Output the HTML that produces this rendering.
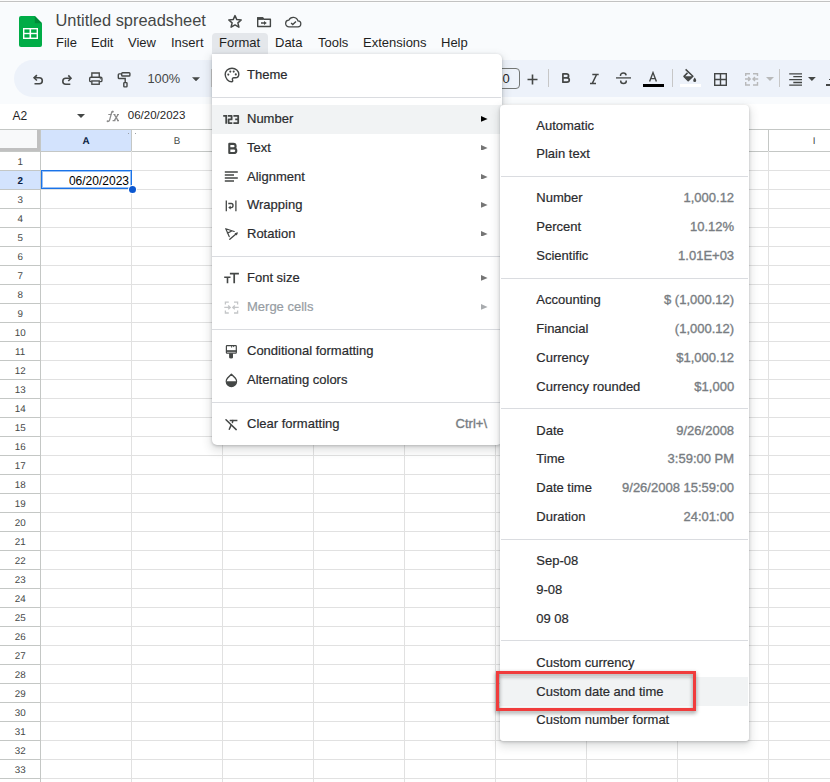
<!DOCTYPE html>
<html><head><meta charset="utf-8">
<style>
html,body{margin:0;padding:0;}
body{width:830px;height:782px;overflow:hidden;position:relative;background:#f9fbfd;font-family:"Liberation Sans",sans-serif;}
.t{position:absolute;line-height:1;white-space:nowrap;}
</style></head><body>
<div style="position:absolute;left:0;top:129px;width:830px;height:653px;background:#fff"></div>
<div style="position:absolute;left:0;top:151px;width:40px;height:631px;background:#fff"></div>
<div style="position:absolute;left:41px;top:130px;width:90px;height:21px;background:#d3e3fd"></div>
<div style="position:absolute;left:0;top:171px;width:40px;height:18px;background:#d3e3fd"></div>
<div style="position:absolute;left:0;top:129px;width:830px;height:1px;background:#c4c7c5"></div>
<div style="position:absolute;left:0;top:151px;width:40px;height:1px;background:#c4c7c5"></div>
<div style="position:absolute;left:41px;top:151px;width:789px;height:1px;background:#c4c7c5"></div>
<div style="position:absolute;left:0;top:170px;width:40px;height:1px;background:#c4c7c5"></div>
<div style="position:absolute;left:41px;top:170px;width:789px;height:1px;background:#e1e1e1"></div>
<div style="position:absolute;left:0;top:189px;width:40px;height:1px;background:#c4c7c5"></div>
<div style="position:absolute;left:41px;top:189px;width:789px;height:1px;background:#e1e1e1"></div>
<div style="position:absolute;left:0;top:208px;width:40px;height:1px;background:#c4c7c5"></div>
<div style="position:absolute;left:41px;top:208px;width:789px;height:1px;background:#e1e1e1"></div>
<div style="position:absolute;left:0;top:227px;width:40px;height:1px;background:#c4c7c5"></div>
<div style="position:absolute;left:41px;top:227px;width:789px;height:1px;background:#e1e1e1"></div>
<div style="position:absolute;left:0;top:246px;width:40px;height:1px;background:#c4c7c5"></div>
<div style="position:absolute;left:41px;top:246px;width:789px;height:1px;background:#e1e1e1"></div>
<div style="position:absolute;left:0;top:265px;width:40px;height:1px;background:#c4c7c5"></div>
<div style="position:absolute;left:41px;top:265px;width:789px;height:1px;background:#e1e1e1"></div>
<div style="position:absolute;left:0;top:284px;width:40px;height:1px;background:#c4c7c5"></div>
<div style="position:absolute;left:41px;top:284px;width:789px;height:1px;background:#e1e1e1"></div>
<div style="position:absolute;left:0;top:303px;width:40px;height:1px;background:#c4c7c5"></div>
<div style="position:absolute;left:41px;top:303px;width:789px;height:1px;background:#e1e1e1"></div>
<div style="position:absolute;left:0;top:322px;width:40px;height:1px;background:#c4c7c5"></div>
<div style="position:absolute;left:41px;top:322px;width:789px;height:1px;background:#e1e1e1"></div>
<div style="position:absolute;left:0;top:341px;width:40px;height:1px;background:#c4c7c5"></div>
<div style="position:absolute;left:41px;top:341px;width:789px;height:1px;background:#e1e1e1"></div>
<div style="position:absolute;left:0;top:360px;width:40px;height:1px;background:#c4c7c5"></div>
<div style="position:absolute;left:41px;top:360px;width:789px;height:1px;background:#e1e1e1"></div>
<div style="position:absolute;left:0;top:379px;width:40px;height:1px;background:#c4c7c5"></div>
<div style="position:absolute;left:41px;top:379px;width:789px;height:1px;background:#e1e1e1"></div>
<div style="position:absolute;left:0;top:398px;width:40px;height:1px;background:#c4c7c5"></div>
<div style="position:absolute;left:41px;top:398px;width:789px;height:1px;background:#e1e1e1"></div>
<div style="position:absolute;left:0;top:417px;width:40px;height:1px;background:#c4c7c5"></div>
<div style="position:absolute;left:41px;top:417px;width:789px;height:1px;background:#e1e1e1"></div>
<div style="position:absolute;left:0;top:436px;width:40px;height:1px;background:#c4c7c5"></div>
<div style="position:absolute;left:41px;top:436px;width:789px;height:1px;background:#e1e1e1"></div>
<div style="position:absolute;left:0;top:455px;width:40px;height:1px;background:#c4c7c5"></div>
<div style="position:absolute;left:41px;top:455px;width:789px;height:1px;background:#e1e1e1"></div>
<div style="position:absolute;left:0;top:474px;width:40px;height:1px;background:#c4c7c5"></div>
<div style="position:absolute;left:41px;top:474px;width:789px;height:1px;background:#e1e1e1"></div>
<div style="position:absolute;left:0;top:493px;width:40px;height:1px;background:#c4c7c5"></div>
<div style="position:absolute;left:41px;top:493px;width:789px;height:1px;background:#e1e1e1"></div>
<div style="position:absolute;left:0;top:512px;width:40px;height:1px;background:#c4c7c5"></div>
<div style="position:absolute;left:41px;top:512px;width:789px;height:1px;background:#e1e1e1"></div>
<div style="position:absolute;left:0;top:531px;width:40px;height:1px;background:#c4c7c5"></div>
<div style="position:absolute;left:41px;top:531px;width:789px;height:1px;background:#e1e1e1"></div>
<div style="position:absolute;left:0;top:550px;width:40px;height:1px;background:#c4c7c5"></div>
<div style="position:absolute;left:41px;top:550px;width:789px;height:1px;background:#e1e1e1"></div>
<div style="position:absolute;left:0;top:569px;width:40px;height:1px;background:#c4c7c5"></div>
<div style="position:absolute;left:41px;top:569px;width:789px;height:1px;background:#e1e1e1"></div>
<div style="position:absolute;left:0;top:588px;width:40px;height:1px;background:#c4c7c5"></div>
<div style="position:absolute;left:41px;top:588px;width:789px;height:1px;background:#e1e1e1"></div>
<div style="position:absolute;left:0;top:607px;width:40px;height:1px;background:#c4c7c5"></div>
<div style="position:absolute;left:41px;top:607px;width:789px;height:1px;background:#e1e1e1"></div>
<div style="position:absolute;left:0;top:626px;width:40px;height:1px;background:#c4c7c5"></div>
<div style="position:absolute;left:41px;top:626px;width:789px;height:1px;background:#e1e1e1"></div>
<div style="position:absolute;left:0;top:645px;width:40px;height:1px;background:#c4c7c5"></div>
<div style="position:absolute;left:41px;top:645px;width:789px;height:1px;background:#e1e1e1"></div>
<div style="position:absolute;left:0;top:664px;width:40px;height:1px;background:#c4c7c5"></div>
<div style="position:absolute;left:41px;top:664px;width:789px;height:1px;background:#e1e1e1"></div>
<div style="position:absolute;left:0;top:683px;width:40px;height:1px;background:#c4c7c5"></div>
<div style="position:absolute;left:41px;top:683px;width:789px;height:1px;background:#e1e1e1"></div>
<div style="position:absolute;left:0;top:702px;width:40px;height:1px;background:#c4c7c5"></div>
<div style="position:absolute;left:41px;top:702px;width:789px;height:1px;background:#e1e1e1"></div>
<div style="position:absolute;left:0;top:721px;width:40px;height:1px;background:#c4c7c5"></div>
<div style="position:absolute;left:41px;top:721px;width:789px;height:1px;background:#e1e1e1"></div>
<div style="position:absolute;left:0;top:740px;width:40px;height:1px;background:#c4c7c5"></div>
<div style="position:absolute;left:41px;top:740px;width:789px;height:1px;background:#e1e1e1"></div>
<div style="position:absolute;left:0;top:759px;width:40px;height:1px;background:#c4c7c5"></div>
<div style="position:absolute;left:41px;top:759px;width:789px;height:1px;background:#e1e1e1"></div>
<div style="position:absolute;left:0;top:778px;width:40px;height:1px;background:#c4c7c5"></div>
<div style="position:absolute;left:41px;top:778px;width:789px;height:1px;background:#e1e1e1"></div>
<div style="position:absolute;left:40px;top:129px;width:1px;height:653px;background:#c4c7c5"></div>
<div style="position:absolute;left:131px;top:129px;width:1px;height:22px;background:#c4c7c5"></div>
<div style="position:absolute;left:131px;top:151px;width:1px;height:631px;background:#e1e1e1"></div>
<div style="position:absolute;left:222px;top:129px;width:1px;height:22px;background:#c4c7c5"></div>
<div style="position:absolute;left:222px;top:151px;width:1px;height:631px;background:#e1e1e1"></div>
<div style="position:absolute;left:313px;top:129px;width:1px;height:22px;background:#c4c7c5"></div>
<div style="position:absolute;left:313px;top:151px;width:1px;height:631px;background:#e1e1e1"></div>
<div style="position:absolute;left:404px;top:129px;width:1px;height:22px;background:#c4c7c5"></div>
<div style="position:absolute;left:404px;top:151px;width:1px;height:631px;background:#e1e1e1"></div>
<div style="position:absolute;left:495px;top:129px;width:1px;height:22px;background:#c4c7c5"></div>
<div style="position:absolute;left:495px;top:151px;width:1px;height:631px;background:#e1e1e1"></div>
<div style="position:absolute;left:586px;top:129px;width:1px;height:22px;background:#c4c7c5"></div>
<div style="position:absolute;left:586px;top:151px;width:1px;height:631px;background:#e1e1e1"></div>
<div style="position:absolute;left:677px;top:129px;width:1px;height:22px;background:#c4c7c5"></div>
<div style="position:absolute;left:677px;top:151px;width:1px;height:631px;background:#e1e1e1"></div>
<div style="position:absolute;left:768px;top:129px;width:1px;height:22px;background:#c4c7c5"></div>
<div style="position:absolute;left:768px;top:151px;width:1px;height:631px;background:#e1e1e1"></div>
<div style="position:absolute;left:859px;top:129px;width:1px;height:22px;background:#c4c7c5"></div>
<div style="position:absolute;left:859px;top:151px;width:1px;height:631px;background:#e1e1e1"></div>
<div style="position:absolute;left:0;top:130px;width:37px;height:18px;background:#f8f9fa"></div>
<div style="position:absolute;left:37px;top:130px;width:3px;height:21px;background:#c0c0c0"></div>
<div style="position:absolute;left:0;top:148px;width:40px;height:3px;background:#c0c0c0"></div>
<div class="t" style="left:36.0px;width:100px;text-align:center;top:136.52px;font-size:9.9px;color:#0b1f44;font-weight:bold;text-rendering:geometricPrecision">A</div>
<div class="t" style="left:127.0px;width:100px;text-align:center;top:136.60px;font-size:9.8px;color:#444746;text-rendering:geometricPrecision">B</div>
<div class="t" style="left:218.0px;width:100px;text-align:center;top:136.60px;font-size:9.8px;color:#444746;text-rendering:geometricPrecision">C</div>
<div class="t" style="left:309.0px;width:100px;text-align:center;top:136.60px;font-size:9.8px;color:#444746;text-rendering:geometricPrecision">D</div>
<div class="t" style="left:400.0px;width:100px;text-align:center;top:136.60px;font-size:9.8px;color:#444746;text-rendering:geometricPrecision">E</div>
<div class="t" style="left:491.0px;width:100px;text-align:center;top:136.60px;font-size:9.8px;color:#444746;text-rendering:geometricPrecision">F</div>
<div class="t" style="left:582.0px;width:100px;text-align:center;top:136.60px;font-size:9.8px;color:#444746;text-rendering:geometricPrecision">G</div>
<div class="t" style="left:673.0px;width:100px;text-align:center;top:136.60px;font-size:9.8px;color:#444746;text-rendering:geometricPrecision">H</div>
<div class="t" style="left:764.0px;width:100px;text-align:center;top:136.60px;font-size:9.8px;color:#444746;text-rendering:geometricPrecision">I</div>
<div class="t" style="left:-29.8px;width:100px;text-align:center;top:157.60px;font-size:9.8px;color:#444746;text-rendering:geometricPrecision">1</div>
<div class="t" style="left:-29.8px;width:100px;text-align:center;top:176.52px;font-size:9.9px;color:#0b1f44;font-weight:bold;text-rendering:geometricPrecision">2</div>
<div class="t" style="left:-29.8px;width:100px;text-align:center;top:195.60px;font-size:9.8px;color:#444746;text-rendering:geometricPrecision">3</div>
<div class="t" style="left:-29.8px;width:100px;text-align:center;top:214.60px;font-size:9.8px;color:#444746;text-rendering:geometricPrecision">4</div>
<div class="t" style="left:-29.8px;width:100px;text-align:center;top:233.60px;font-size:9.8px;color:#444746;text-rendering:geometricPrecision">5</div>
<div class="t" style="left:-29.8px;width:100px;text-align:center;top:252.60px;font-size:9.8px;color:#444746;text-rendering:geometricPrecision">6</div>
<div class="t" style="left:-29.8px;width:100px;text-align:center;top:271.60px;font-size:9.8px;color:#444746;text-rendering:geometricPrecision">7</div>
<div class="t" style="left:-29.8px;width:100px;text-align:center;top:290.60px;font-size:9.8px;color:#444746;text-rendering:geometricPrecision">8</div>
<div class="t" style="left:-29.8px;width:100px;text-align:center;top:309.60px;font-size:9.8px;color:#444746;text-rendering:geometricPrecision">9</div>
<div class="t" style="left:-29.8px;width:100px;text-align:center;top:328.60px;font-size:9.8px;color:#444746;text-rendering:geometricPrecision">10</div>
<div class="t" style="left:-29.8px;width:100px;text-align:center;top:347.60px;font-size:9.8px;color:#444746;text-rendering:geometricPrecision">11</div>
<div class="t" style="left:-29.8px;width:100px;text-align:center;top:366.60px;font-size:9.8px;color:#444746;text-rendering:geometricPrecision">12</div>
<div class="t" style="left:-29.8px;width:100px;text-align:center;top:385.60px;font-size:9.8px;color:#444746;text-rendering:geometricPrecision">13</div>
<div class="t" style="left:-29.8px;width:100px;text-align:center;top:404.60px;font-size:9.8px;color:#444746;text-rendering:geometricPrecision">14</div>
<div class="t" style="left:-29.8px;width:100px;text-align:center;top:423.60px;font-size:9.8px;color:#444746;text-rendering:geometricPrecision">15</div>
<div class="t" style="left:-29.8px;width:100px;text-align:center;top:442.60px;font-size:9.8px;color:#444746;text-rendering:geometricPrecision">16</div>
<div class="t" style="left:-29.8px;width:100px;text-align:center;top:461.60px;font-size:9.8px;color:#444746;text-rendering:geometricPrecision">17</div>
<div class="t" style="left:-29.8px;width:100px;text-align:center;top:480.60px;font-size:9.8px;color:#444746;text-rendering:geometricPrecision">18</div>
<div class="t" style="left:-29.8px;width:100px;text-align:center;top:499.60px;font-size:9.8px;color:#444746;text-rendering:geometricPrecision">19</div>
<div class="t" style="left:-29.8px;width:100px;text-align:center;top:518.60px;font-size:9.8px;color:#444746;text-rendering:geometricPrecision">20</div>
<div class="t" style="left:-29.8px;width:100px;text-align:center;top:537.60px;font-size:9.8px;color:#444746;text-rendering:geometricPrecision">21</div>
<div class="t" style="left:-29.8px;width:100px;text-align:center;top:556.60px;font-size:9.8px;color:#444746;text-rendering:geometricPrecision">22</div>
<div class="t" style="left:-29.8px;width:100px;text-align:center;top:575.60px;font-size:9.8px;color:#444746;text-rendering:geometricPrecision">23</div>
<div class="t" style="left:-29.8px;width:100px;text-align:center;top:594.60px;font-size:9.8px;color:#444746;text-rendering:geometricPrecision">24</div>
<div class="t" style="left:-29.8px;width:100px;text-align:center;top:613.60px;font-size:9.8px;color:#444746;text-rendering:geometricPrecision">25</div>
<div class="t" style="left:-29.8px;width:100px;text-align:center;top:632.60px;font-size:9.8px;color:#444746;text-rendering:geometricPrecision">26</div>
<div class="t" style="left:-29.8px;width:100px;text-align:center;top:651.60px;font-size:9.8px;color:#444746;text-rendering:geometricPrecision">27</div>
<div class="t" style="left:-29.8px;width:100px;text-align:center;top:670.60px;font-size:9.8px;color:#444746;text-rendering:geometricPrecision">28</div>
<div class="t" style="left:-29.8px;width:100px;text-align:center;top:689.60px;font-size:9.8px;color:#444746;text-rendering:geometricPrecision">29</div>
<div class="t" style="left:-29.8px;width:100px;text-align:center;top:708.60px;font-size:9.8px;color:#444746;text-rendering:geometricPrecision">30</div>
<div class="t" style="left:-29.8px;width:100px;text-align:center;top:727.60px;font-size:9.8px;color:#444746;text-rendering:geometricPrecision">31</div>
<div class="t" style="left:-29.8px;width:100px;text-align:center;top:746.60px;font-size:9.8px;color:#444746;text-rendering:geometricPrecision">32</div>
<div class="t" style="left:-29.8px;width:100px;text-align:center;top:765.60px;font-size:9.8px;color:#444746;text-rendering:geometricPrecision">33</div>
<div class="t" style="right:701px;top:174.64px;font-size:12px;color:#000;">06/20/2023</div>
<div style="position:absolute;left:41px;top:170px;width:89px;height:17px;border:1px solid #1a73e8;box-shadow:inset 0 0 0 1px rgba(26,115,232,.45)"></div>
<div style="position:absolute;left:128.8px;top:185.8px;width:7.2px;height:7.2px;border-radius:50%;background:#0b57d0;box-shadow:0 0 0 1px #fff"></div>
<div style="position:absolute;left:128px;top:133px;width:1px;height:1px;background:#9aa0a6"></div>
<div style="position:absolute;left:135px;top:133px;width:1px;height:1px;background:#9aa0a6"></div>
<div style="position:absolute;left:0;top:0;width:830px;height:129px;background:#f9fbfd"></div>
<div style="position:absolute;left:0;top:0;width:830px;height:1px;background:#fbfbfb"></div>
<div style="position:absolute;left:0;top:1px;width:830px;height:1px;background:#c2c2c2"></div>
<div style="position:absolute;left:0;top:2px;width:830px;height:1px;background:#fdfdfd"></div>
<svg style="position:absolute;left:19px;top:16px" width="24" height="31" viewBox="0 0 24 31">
<path d="M2 0 H15.8 L23 7.2 V29 a2 2 0 0 1 -2 2 H2 a2 2 0 0 1 -2 -2 V2 a2 2 0 0 1 2 -2z" fill="#00ac47"/>
<path d="M15.8 0 V7.2 H23z" fill="#008a39"/>
<rect x="4" y="12" width="15" height="11" fill="#fff"/>
<rect x="5.4" y="13.4" width="5.1" height="3.4" fill="#00ac47"/>
<rect x="12.1" y="13.4" width="5.5" height="3.4" fill="#00ac47"/>
<rect x="5.4" y="18.2" width="5.1" height="3.4" fill="#00ac47"/>
<rect x="12.1" y="18.2" width="5.5" height="3.4" fill="#00ac47"/>
</svg>
<div class="t " style="left:55.5px;top:12.02px;font-size:16.4px;color:#444746;">Untitled spreadsheet</div>
<svg style="position:absolute;left:227.3px;top:14.2px" width="16" height="15" viewBox="0 0 16 15">
<path d="M8 1.6 L9.8 5.6 L14.2 6 L10.9 8.9 L11.9 13.2 L8 10.9 L4.1 13.2 L5.1 8.9 L1.8 6 L6.2 5.6z" fill="none" stroke="#444746" stroke-width="1.5" stroke-linejoin="round"/>
</svg>
<svg style="position:absolute;left:256px;top:16px" width="16" height="12" viewBox="0 0 16 12">
<path d="M1.7 10.5 V1.9 H6.6 L7.9 3.2 H14.4 V10.5z" fill="none" stroke="#444746" stroke-width="1.4" stroke-linejoin="round"/>
<rect x="1" y="1.2" width="6.3" height="2.7" fill="#444746"/>
<path d="M5 7 H8.6" stroke="#444746" stroke-width="1.5"/>
<path d="M8 4.9 L10.8 7 L8 9.1z" fill="#444746"/>
</svg>
<svg style="position:absolute;left:284.5px;top:15.5px" width="18" height="13" viewBox="0 0 19.5 14.1">
<path d="M4.5 11.8 H13.8 a3.2 3.2 0 0 0 0.3 -6.4 a5.3 5.3 0 0 0 -10 -0.8 a3.6 3.6 0 0 0 0.4 7.2z" fill="none" stroke="#444746" stroke-width="1.35"/>
<path d="M6.6 7.6 L8.4 9.3 L11.9 5.9" fill="none" stroke="#444746" stroke-width="1.5"/>
</svg>
<div style="position:absolute;left:212px;top:33px;width:56px;height:22px;background:#e4e7eb;border-radius:4px 4px 0 0"></div>
<div class="t " style="left:56px;top:36.30px;font-size:13px;color:#1f1f1f;">File</div>
<div class="t " style="left:91px;top:36.30px;font-size:13px;color:#1f1f1f;">Edit</div>
<div class="t " style="left:128px;top:36.30px;font-size:13px;color:#1f1f1f;">View</div>
<div class="t " style="left:171px;top:36.30px;font-size:13px;color:#1f1f1f;">Insert</div>
<div class="t " style="left:219px;top:36.30px;font-size:13px;color:#1f1f1f;">Format</div>
<div class="t " style="left:275px;top:36.30px;font-size:13px;color:#1f1f1f;">Data</div>
<div class="t " style="left:318px;top:36.30px;font-size:13px;color:#1f1f1f;">Tools</div>
<div class="t " style="left:363px;top:36.30px;font-size:13px;color:#1f1f1f;">Extensions</div>
<div class="t " style="left:441px;top:36.30px;font-size:13px;color:#1f1f1f;">Help</div>
<div style="position:absolute;left:14px;top:60px;width:840px;height:37px;background:#edf2fa;border-radius:19px"></div>
<div style="position:absolute;left:0;top:104px;width:830px;height:25px;background:#fff"></div>
<div class="t " style="left:12.5px;top:109.84px;font-size:12px;color:#1f1f1f;">A2</div>
<svg style="position:absolute;left:77px;top:114px" width="8" height="4" viewBox="0 0 8 4"><path d="M0 0 H8 L4 4z" fill="#444746"/></svg>
<svg style="position:absolute;left:106px;top:110px" width="14" height="13" viewBox="0 0 14 13">
<path d="M7.4 1.5 Q6 1.1 5.6 2.7 L3.6 10.2 Q3.2 11.7 1.8 11.4" fill="none" stroke="#8c8c8c" stroke-width="1.3"/>
<circle cx="6.7" cy="1.7" r="1" fill="#8c8c8c"/><circle cx="1.6" cy="11.2" r="1" fill="#8c8c8c"/>
<path d="M2.3 4.5 H5.6 M7.4 4.5 H9.4 M11 4.5 H13" stroke="#8c8c8c" stroke-width="1.1"/>
<path d="M8.3 4.5 L12.1 10.6 M12.1 4.5 L8.3 10.6" stroke="#8c8c8c" stroke-width="1.4"/>
<path d="M6.6 10.6 H9.4 M11 10.6 H13" stroke="#8c8c8c" stroke-width="1.1"/>
</svg>
<div class="t " style="left:127.8px;top:109.77px;font-size:11.5px;color:#1f1f1f;">06/20/2023</div>
<svg style="position:absolute;left:31px;top:73px" width="14" height="13" viewBox="0 0 14 13">
<path d="M5.9 2.1 L3.1 4.8 L5.9 7.5" fill="none" stroke="#444746" stroke-width="1.6"/>
<path d="M3.3 4.8 H8.3 A3 3 0 0 1 8.3 10.8 H3.5" fill="none" stroke="#444746" stroke-width="1.6"/>
</svg>
<svg style="position:absolute;left:56px;top:73px" width="17" height="14" viewBox="0 0 17 14">
<path d="M12.3 2.4 L15.0 5.2 L12.3 8.0" fill="none" stroke="#444746" stroke-width="1.6"/>
<path d="M14.8 5.2 H9.8 A3 3 0 0 0 9.8 11.2 H14.3" fill="none" stroke="#444746" stroke-width="1.6"/>
</svg>
<svg style="position:absolute;left:88px;top:71px" width="16" height="15" viewBox="0 0 16 15">
<path d="M3.85 6 V1.95 H11.25 V6" fill="none" stroke="#444746" stroke-width="1.35"/>
<path d="M3.6 10.65 H2.9 Q1.65 10.65 1.65 9.4 V7.5 Q1.65 6.25 2.9 6.25 H12.7 Q13.95 6.25 13.95 7.5 V9.4 Q13.95 10.65 12.7 10.65 H11.5" fill="none" stroke="#444746" stroke-width="1.35"/>
<rect x="3.85" y="9.95" width="7.4" height="3.3" fill="#edf2fa" stroke="#444746" stroke-width="1.35"/>
<circle cx="12.3" cy="7.7" r="0.6" fill="#444746"/>
</svg>
<svg style="position:absolute;left:117px;top:71px" width="14" height="17" viewBox="0 0 14 17">
<rect x="4.7" y="1.7" width="8.2" height="3.3" rx="0.8" fill="none" stroke="#444746" stroke-width="1.4"/>
<path d="M4.7 2.9 H2.1 Q1.3 2.9 1.3 3.8 V6.7 Q1.3 7.5 2.1 7.5 H8.2 V11.2" fill="none" stroke="#444746" stroke-width="1.4"/>
<rect x="6.8" y="11.6" width="3.2" height="4.3" rx="0.6" fill="none" stroke="#444746" stroke-width="1.4"/>
</svg>
<div class="t " style="left:147.5px;top:72.76px;font-size:12.8px;color:#444746;">100%</div>
<svg style="position:absolute;left:192px;top:76.5px" width="8" height="4.5" viewBox="0 0 8 4"><path d="M0 0 H8 L4 4z" fill="#444746"/></svg>
<div style="position:absolute;left:211px;top:69px;width:1px;height:18px;background:#c7c7c7"></div>
<div style="position:absolute;left:470px;top:68px;width:50px;height:21px;border:1px solid #747775;border-radius:4px;box-sizing:border-box"></div>
<div class="t " style="left:502.5px;top:71.50px;font-size:13px;color:#1f1f1f;">0</div>
<svg style="position:absolute;left:527px;top:73.5px" width="11" height="11" viewBox="0 0 11 11"><path d="M5.5 0.5 V10.5 M0.5 5.5 H10.5" stroke="#444746" stroke-width="1.6"/></svg>
<div style="position:absolute;left:548px;top:69px;width:1px;height:18px;background:#c7c7c7"></div>
<svg style="position:absolute;left:561px;top:72px" width="10" height="12" viewBox="0 0 10 12">
<path d="M1.9 1.9 H5.3 Q7.6 1.9 7.6 3.9 Q7.6 5.9 5.3 5.9 H1.9z M1.9 5.9 H5.8 Q8.3 5.9 8.3 8 Q8.3 10.2 5.8 10.2 H1.9z" fill="none" stroke="#444746" stroke-width="1.7" stroke-linejoin="round"/>
</svg>
<svg style="position:absolute;left:589px;top:73px" width="11" height="12" viewBox="0 0 11 12">
<path d="M3.3 1.5 H9.7 M1 10.4 H7 M7.6 1.5 L3.3 10.4" fill="none" stroke="#444746" stroke-width="1.5"/>
</svg>
<svg style="position:absolute;left:615px;top:72px" width="17" height="13" viewBox="0 0 17 13">
<path d="M1 5.9 H16" stroke="#444746" stroke-width="1.3"/>
<path d="M5.5 3.9 V3.6 A2.7 2.4 0 0 1 11.1 3.4" fill="none" stroke="#444746" stroke-width="1.5"/>
<path d="M5.7 8.5 V9 A2.8 2.5 0 0 0 11.3 9 V8.4" fill="none" stroke="#444746" stroke-width="1.5"/>
</svg>
<svg style="position:absolute;left:642px;top:71px" width="23" height="17" viewBox="0 0 23 17">
<path d="M7.6 10.4 L11 1.6 L14.4 10.4 M8.7 7.6 H13.3" fill="none" stroke="#444746" stroke-width="1.4"/>
<rect x="1" y="13" width="21" height="3" fill="#000"/>
</svg>
<div style="position:absolute;left:672px;top:69px;width:1px;height:18px;background:#c7c7c7"></div>
<svg style="position:absolute;left:676px;top:66px" width="28" height="24" viewBox="0 0 28 24">
<path d="M9.6 3.4 L16.9 10.2 L12.2 14.7 L8 10.4 L11.5 6.9" fill="none" stroke="#444746" stroke-width="1.5" stroke-linejoin="round"/>
<path d="M8.3 10.3 H16.6 L12.2 14.6z" fill="#444746"/>
<path d="M18.7 11.6 Q17.1 13.6 17.2 14.4 A1.5 1.5 0 0 0 20.2 14.4 Q20.3 13.6 18.7 11.6z" fill="#444746"/>
<rect x="4" y="18" width="21" height="3" fill="#fff"/>
</svg>
<svg style="position:absolute;left:714px;top:73px" width="14" height="13" viewBox="0 0 14 13">
<rect x="0.7" y="0.7" width="11.6" height="11.6" fill="none" stroke="#444746" stroke-width="1.4"/>
<path d="M6.5 0.7 V12.3 M0.7 6.5 H12.3" stroke="#444746" stroke-width="1.4"/>
</svg>
<svg style="position:absolute;left:744px;top:72px" width="32" height="14" viewBox="0 0 32 14">
<path d="M6 1.7 H1.7 V4 M1.7 10 V13 H6 M9 1.7 H13.5 V4 M13.5 10 V13 H9" stroke="#b8b9ba" stroke-width="1.4" fill="none"/>
<path d="M1 7 H5.8 M4.2 5 L6.2 7 L4.2 9 M14.2 7 H9.4 M11 5 L9 7 L11 9" stroke="#b8b9ba" stroke-width="1.4" fill="none"/>
<path d="M22 5 H30 L26 9z" fill="#b8b9ba"/>
</svg>
<div style="position:absolute;left:779px;top:69px;width:1px;height:18px;background:#c7c7c7"></div>
<svg style="position:absolute;left:788px;top:72px" width="30" height="15" viewBox="0 0 30 15">
<path d="M1.2 1.8 H14 M5.3 4.7 H14 M1.2 7.6 H14 M5.3 10.5 H14 M1.2 13.2 H14" stroke="#444746" stroke-width="1.3"/>
<path d="M20 5 H27.8 L23.9 9z" fill="#444746"/>
</svg>
<div style="position:absolute;left:826px;top:84px;width:6px;height:2px;background:#444746"></div>
<div style="position:absolute;left:829px;top:78.5px;width:2px;height:1.5px;background:#444746"></div>
<div style="position:absolute;left:212px;top:54px;width:290px;height:391px;background:#fff;border-radius:0 5px 5px 5px;box-shadow:0 1px 3px 0 rgba(60,64,67,.3),0 4px 8px 2px rgba(60,64,67,.15)"></div>
<div style="position:absolute;left:212px;top:54px;width:56px;height:6px;background:#fff"></div>
<div style="position:absolute;left:212px;top:105px;width:290px;height:29px;background:#f1f3f4"></div>
<div style="position:absolute;left:212px;top:97px;width:289px;height:1px;background:#dadce0"></div>
<div style="position:absolute;left:212px;top:256px;width:289px;height:1px;background:#dadce0"></div>
<div style="position:absolute;left:212px;top:329px;width:289px;height:1px;background:#dadce0"></div>
<div style="position:absolute;left:212px;top:402px;width:289px;height:1px;background:#dadce0"></div>
<div class="t " style="left:247px;top:67.90px;font-size:13px;color:#2a2b2e;-webkit-text-stroke:0.2px #2a2b2e">Theme</div>
<div class="t " style="left:247px;top:112.00px;font-size:13px;color:#2a2b2e;-webkit-text-stroke:0.2px #2a2b2e">Number</div>
<svg style="position:absolute;left:481.2px;top:115.9px" width="6.6" height="5.8" viewBox="0 0 6.6 5.8"><path d="M0 0 L6.6 2.9 L0 5.8z" fill="#000"/></svg>
<div class="t " style="left:247px;top:140.80px;font-size:13px;color:#2a2b2e;-webkit-text-stroke:0.2px #2a2b2e">Text</div>
<svg style="position:absolute;left:481.2px;top:144.7px" width="6.6" height="5.8" viewBox="0 0 6.6 5.8"><path d="M0 0 L6.6 2.9 L0 5.8z" fill="#757575"/></svg>
<div class="t " style="left:247px;top:169.60px;font-size:13px;color:#2a2b2e;-webkit-text-stroke:0.2px #2a2b2e">Alignment</div>
<svg style="position:absolute;left:481.2px;top:173.5px" width="6.6" height="5.8" viewBox="0 0 6.6 5.8"><path d="M0 0 L6.6 2.9 L0 5.8z" fill="#757575"/></svg>
<div class="t " style="left:247px;top:198.00px;font-size:13px;color:#2a2b2e;-webkit-text-stroke:0.2px #2a2b2e">Wrapping</div>
<svg style="position:absolute;left:481.2px;top:201.9px" width="6.6" height="5.8" viewBox="0 0 6.6 5.8"><path d="M0 0 L6.6 2.9 L0 5.8z" fill="#757575"/></svg>
<div class="t " style="left:247px;top:226.70px;font-size:13px;color:#2a2b2e;-webkit-text-stroke:0.2px #2a2b2e">Rotation</div>
<svg style="position:absolute;left:481.2px;top:230.6px" width="6.6" height="5.8" viewBox="0 0 6.6 5.8"><path d="M0 0 L6.6 2.9 L0 5.8z" fill="#757575"/></svg>
<div class="t " style="left:247px;top:271.20px;font-size:13px;color:#2a2b2e;-webkit-text-stroke:0.2px #2a2b2e">Font size</div>
<svg style="position:absolute;left:481.2px;top:275.1px" width="6.6" height="5.8" viewBox="0 0 6.6 5.8"><path d="M0 0 L6.6 2.9 L0 5.8z" fill="#757575"/></svg>
<div class="t " style="left:247px;top:300.00px;font-size:13px;color:#979da3;-webkit-text-stroke:0.2px #979da3">Merge cells</div>
<svg style="position:absolute;left:481.2px;top:303.9px" width="6.6" height="5.8" viewBox="0 0 6.6 5.8"><path d="M0 0 L6.6 2.9 L0 5.8z" fill="#a8abae"/></svg>
<div class="t " style="left:247px;top:344.00px;font-size:13px;color:#2a2b2e;-webkit-text-stroke:0.2px #2a2b2e">Conditional formatting</div>
<div class="t " style="left:247px;top:373.00px;font-size:13px;color:#2a2b2e;-webkit-text-stroke:0.2px #2a2b2e">Alternating colors</div>
<div class="t " style="left:247px;top:417.00px;font-size:13px;color:#2a2b2e;-webkit-text-stroke:0.2px #2a2b2e">Clear formatting</div>
<div class="t" style="right:343px;top:417.00px;font-size:13px;color:#787d82;-webkit-text-stroke:0.35px #787d82">Ctrl+\</div>
<svg style="position:absolute;left:223.6px;top:67px" width="16" height="16" viewBox="0 0 16 16">
<path d="M8 1.2 C4.2 1.2 1.2 4.1 1.2 7.6 C1.2 11.5 4.6 14.8 7.6 14.8 C8.8 14.8 8.9 13.8 8.5 12.9 C8 11.8 8.7 10.8 9.9 10.8 H11.3 C13.2 10.8 14.8 9.4 14.8 7.3 C14.8 3.9 11.8 1.2 8 1.2z" fill="none" stroke="#444746" stroke-width="1.4"/>
<circle cx="4.3" cy="7.6" r="1.05" fill="#444746"/><circle cx="6.3" cy="4.6" r="1.05" fill="#444746"/>
<circle cx="9.7" cy="4.6" r="1.05" fill="#444746"/><circle cx="11.8" cy="7.4" r="1.05" fill="#444746"/>
</svg>
<svg style="position:absolute;left:223px;top:114px" width="17" height="11" viewBox="0 0 17 11">
<path d="M0.2 1.8 H3.2 V9.8" fill="none" stroke="#444746" stroke-width="1.8"/>
<path d="M4.8 1.8 H8.6 V5.4 H5.6 V9.1 H9.3" fill="none" stroke="#444746" stroke-width="1.8" stroke-linejoin="round"/>
<path d="M10.4 1.8 H15.2 V9.1 H10.4 M12.2 5.4 H15.2" fill="none" stroke="#444746" stroke-width="1.8" stroke-linejoin="round"/>
</svg>
<svg style="position:absolute;left:227px;top:142px" width="11" height="13" viewBox="0 0 11 13">
<path d="M2.3 1.9 H6.3 Q8.6 1.9 8.6 4.2 Q8.6 6.4 6.3 6.4 H2.3z M2.3 6.4 H6.7 Q9.3 6.4 9.3 8.7 Q9.3 11 6.7 11 H2.3z" fill="none" stroke="#444746" stroke-width="2.1" stroke-linejoin="round"/>
</svg>
<svg style="position:absolute;left:224px;top:171px" width="14" height="11" viewBox="0 0 14 11">
<path d="M0.8 1 H13.8 M0.8 4 H10 M0.8 7 H13.8 M0.8 10 H10" stroke="#444746" stroke-width="1.3"/>
</svg>
<svg style="position:absolute;left:225px;top:199.5px" width="13" height="12" viewBox="0 0 13 12">
<path d="M1.3 0.6 V11.2 M10.9 0.6 V11.2" stroke="#444746" stroke-width="1.3"/>
<path d="M3.3 3.5 H6.3 Q8 3.5 8 5.5 Q8 7.6 6.3 7.6 H4.5" fill="none" stroke="#444746" stroke-width="1.4"/>
<path d="M3.3 7.6 L5.7 5.6 V9.6z" fill="#444746"/>
</svg>
<svg style="position:absolute;left:224.5px;top:228px" width="14" height="13" viewBox="0 0 14 13">
<path d="M0.8 0.7 L9.2 3.5 M0.8 0.7 L4.2 8.6 M2.4 5.1 L6.3 3.2" fill="none" stroke="#444746" stroke-width="1.2" stroke-linecap="round"/>
<path d="M4.8 11.3 L11.6 5.4" stroke="#444746" stroke-width="1.3" stroke-linecap="round"/>
<path d="M13 4.2 L9.5 5.2 L11.8 7.6z" fill="#444746"/>
</svg>
<svg style="position:absolute;left:224px;top:272px" width="15" height="13" viewBox="0 0 15 13">
<path d="M0.2 5.3 H6.5 M3.5 5.3 V11.3" stroke="#444746" stroke-width="1.6"/>
<path d="M5.9 1.6 H14.9 M10.2 1.6 V11.3" stroke="#444746" stroke-width="1.7"/>
</svg>
<svg style="position:absolute;left:224px;top:300.5px" width="15" height="13" viewBox="0 0 15 13">
<path d="M4.8 1.2 H1.4 V3.4 M1.4 9.6 V12 H4.8 M10 1.2 H13.6 V3.4 M13.6 9.6 V12 H10" stroke="#c4c6c8" stroke-width="1.3" fill="none"/>
<path d="M0.3 6.4 H5.6 M4.2 4.6 L6.2 6.4 L4.2 8.2 M14.7 6.4 H9.4 M10.8 4.6 L8.8 6.4 L10.8 8.2" stroke="#c4c6c8" stroke-width="1.3" fill="none"/>
</svg>
<svg style="position:absolute;left:225px;top:344px" width="13" height="15" viewBox="0 0 13 15">
<rect x="1.4" y="1.6" width="9.9" height="7.5" rx="0.6" fill="none" stroke="#444746" stroke-width="1.2"/>
<rect x="1" y="6.2" width="10.8" height="1.7" fill="#444746"/>
<path d="M6.6 1.5 V3.6 M8.6 1.5 V3.1" stroke="#444746" stroke-width="0.9"/>
<path d="M4.1 9.3 H8 V13.5 Q8 14.6 6.05 14.6 Q4.1 14.6 4.1 13.5z" fill="#444746"/>
</svg>
<svg style="position:absolute;left:225px;top:372.5px" width="13" height="15" viewBox="0 0 13 15">
<path d="M6.4 1.2 L2.6 5 A5.1 5.1 0 1 0 10.2 5z" fill="none" stroke="#444746" stroke-width="1.4" stroke-linejoin="round"/>
<path d="M1.3 8.3 H11.5 A5.1 5.1 0 0 1 1.3 8.3z" fill="#444746"/>
</svg>
<svg style="position:absolute;left:224.5px;top:418.5px" width="13" height="12" viewBox="0 0 13 12">
<path d="M1 0.8 L11.2 10.6" stroke="#444746" stroke-width="1.5" stroke-linecap="round"/>
<path d="M4.7 1.5 H12.4" stroke="#444746" stroke-width="1.5"/>
<path d="M7.8 1.5 L7.4 3.5 M5.9 6.6 L4.3 10.2" stroke="#444746" stroke-width="1.5" stroke-linecap="round"/>
</svg>
<div style="position:absolute;left:500px;top:105px;width:249px;height:636px;background:#fff;border-radius:4px 4px 3px 3px;box-shadow:0 1px 3px 0 rgba(60,64,67,.3),0 4px 8px 2px rgba(60,64,67,.15)"></div>
<div style="position:absolute;left:500px;top:677px;width:248px;height:29px;background:#f1f3f4"></div>
<div style="position:absolute;left:501px;top:176px;width:247px;height:1px;background:#dadce0"></div>
<div style="position:absolute;left:501px;top:278px;width:247px;height:1px;background:#dadce0"></div>
<div style="position:absolute;left:501px;top:408px;width:247px;height:1px;background:#dadce0"></div>
<div style="position:absolute;left:501px;top:539px;width:247px;height:1px;background:#dadce0"></div>
<div style="position:absolute;left:501px;top:640px;width:247px;height:1px;background:#dadce0"></div>
<div class="t " style="left:536.3px;top:118.80px;font-size:13px;color:#2a2b2e;-webkit-text-stroke:0.2px #2a2b2e">Automatic</div>
<div class="t " style="left:536.3px;top:147.30px;font-size:13px;color:#2a2b2e;-webkit-text-stroke:0.2px #2a2b2e">Plain text</div>
<div class="t " style="left:536.3px;top:191.20px;font-size:13px;color:#2a2b2e;-webkit-text-stroke:0.2px #2a2b2e">Number</div>
<div class="t" style="right:95.89999999999998px;top:191.20px;font-size:13px;color:#787d82;-webkit-text-stroke:0.35px #787d82">1,000.12</div>
<div class="t " style="left:536.3px;top:220.10px;font-size:13px;color:#2a2b2e;-webkit-text-stroke:0.2px #2a2b2e">Percent</div>
<div class="t" style="right:95.89999999999998px;top:220.10px;font-size:13px;color:#787d82;-webkit-text-stroke:0.35px #787d82">10.12%</div>
<div class="t " style="left:536.3px;top:248.80px;font-size:13px;color:#2a2b2e;-webkit-text-stroke:0.2px #2a2b2e">Scientific</div>
<div class="t" style="right:95.89999999999998px;top:248.80px;font-size:13px;color:#787d82;-webkit-text-stroke:0.35px #787d82">1.01E+03</div>
<div class="t " style="left:536.3px;top:292.70px;font-size:13px;color:#2a2b2e;-webkit-text-stroke:0.2px #2a2b2e">Accounting</div>
<div class="t" style="right:95.89999999999998px;top:292.70px;font-size:13px;color:#787d82;-webkit-text-stroke:0.35px #787d82">$ (1,000.12)</div>
<div class="t " style="left:536.3px;top:322.20px;font-size:13px;color:#2a2b2e;-webkit-text-stroke:0.2px #2a2b2e">Financial</div>
<div class="t" style="right:95.89999999999998px;top:322.20px;font-size:13px;color:#787d82;-webkit-text-stroke:0.35px #787d82">(1,000.12)</div>
<div class="t " style="left:536.3px;top:350.80px;font-size:13px;color:#2a2b2e;-webkit-text-stroke:0.2px #2a2b2e">Currency</div>
<div class="t" style="right:95.89999999999998px;top:350.80px;font-size:13px;color:#787d82;-webkit-text-stroke:0.35px #787d82">$1,000.12</div>
<div class="t " style="left:536.3px;top:379.70px;font-size:13px;color:#2a2b2e;-webkit-text-stroke:0.2px #2a2b2e">Currency rounded</div>
<div class="t" style="right:95.89999999999998px;top:379.70px;font-size:13px;color:#787d82;-webkit-text-stroke:0.35px #787d82">$1,000</div>
<div class="t " style="left:536.3px;top:423.90px;font-size:13px;color:#2a2b2e;-webkit-text-stroke:0.2px #2a2b2e">Date</div>
<div class="t" style="right:95.89999999999998px;top:423.90px;font-size:13px;color:#787d82;-webkit-text-stroke:0.35px #787d82">9/26/2008</div>
<div class="t " style="left:536.3px;top:452.00px;font-size:13px;color:#2a2b2e;-webkit-text-stroke:0.2px #2a2b2e">Time</div>
<div class="t" style="right:95.89999999999998px;top:452.00px;font-size:13px;color:#787d82;-webkit-text-stroke:0.35px #787d82">3:59:00 PM</div>
<div class="t " style="left:536.3px;top:481.00px;font-size:13px;color:#2a2b2e;-webkit-text-stroke:0.2px #2a2b2e">Date time</div>
<div class="t" style="right:95.89999999999998px;top:481.00px;font-size:13px;color:#787d82;-webkit-text-stroke:0.35px #787d82">9/26/2008 15:59:00</div>
<div class="t " style="left:536.3px;top:509.90px;font-size:13px;color:#2a2b2e;-webkit-text-stroke:0.2px #2a2b2e">Duration</div>
<div class="t" style="right:95.89999999999998px;top:509.90px;font-size:13px;color:#787d82;-webkit-text-stroke:0.35px #787d82">24:01:00</div>
<div class="t " style="left:536.3px;top:554.10px;font-size:13px;color:#2a2b2e;-webkit-text-stroke:0.2px #2a2b2e">Sep-08</div>
<div class="t " style="left:536.3px;top:583.00px;font-size:13px;color:#2a2b2e;-webkit-text-stroke:0.2px #2a2b2e">9-08</div>
<div class="t " style="left:536.3px;top:611.60px;font-size:13px;color:#2a2b2e;-webkit-text-stroke:0.2px #2a2b2e">09 08</div>
<div class="t " style="left:536.3px;top:656.20px;font-size:13px;color:#2a2b2e;-webkit-text-stroke:0.2px #2a2b2e">Custom currency</div>
<div class="t " style="left:536.3px;top:685.00px;font-size:13px;color:#2a2b2e;-webkit-text-stroke:0.2px #2a2b2e">Custom date and time</div>
<div class="t " style="left:536.3px;top:712.70px;font-size:13px;color:#2a2b2e;-webkit-text-stroke:0.2px #2a2b2e">Custom number format</div>
<div style="position:absolute;left:496px;top:671px;width:194px;height:34px;border:3px solid #f03c3c;filter:drop-shadow(0 2px 2px rgba(0,0,0,.45))"></div>
</body></html>
